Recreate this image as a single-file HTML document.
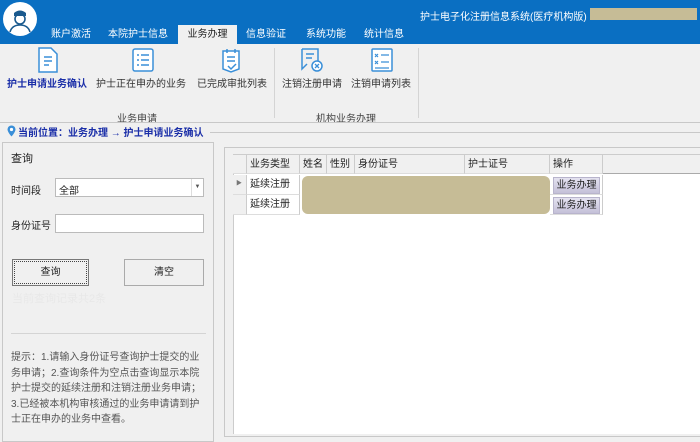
<!DOCTYPE html>
<html><head><meta charset="utf-8"><style>
*{margin:0;padding:0;box-sizing:border-box}
body{width:700px;height:435px;overflow:hidden;background:#f0f0f0;font-family:"Liberation Sans","Noto Sans CJK SC",sans-serif;font-size:10px;color:#222;position:relative}
.a{position:absolute}
.hdr{left:0;top:0;width:700px;height:44px;background:#0a6fc2}
.tab{top:25px;height:19px;line-height:19px;color:#fff;font-size:10px;text-align:center}
.tab.act{background:#f0f0f0;color:#222}
.rb{font-size:10px;color:#333;top:75px;white-space:nowrap}
.ic{top:47px;width:24px;height:26px}
.cell{position:absolute;border-right:1px solid #ccc;border-bottom:1px solid #ddd;height:20px;line-height:19px;padding-left:3px;background:#fff}
.btn{position:absolute;background:linear-gradient(#e4e2f0,#c4c0d8);border:1px solid #b8b4cc;font-size:10px;line-height:16px;text-align:center;width:47px;height:17px}
</style></head><body>
<div class="a hdr"></div>
<div class="a" style="left:3px;top:2px;width:34px;height:34px;border-radius:50%;background:#fff"></div>
<svg class="a" style="left:6px;top:5px" width="28" height="28" viewBox="0 0 28 28"><path d="M8 8 Q14 3 20 8 L20 11 L8 11Z" fill="#1a5a8e"/><circle cx="14" cy="14" r="5" fill="none" stroke="#1a5a8e" stroke-width="1.6"/><path d="M4 27 Q6 20 14 20 Q22 20 24 27" fill="none" stroke="#1a5a8e" stroke-width="1.6"/></svg>
<div class="a" style="left:420px;top:8px;color:#fff;font-size:10px">护士电子化注册信息系统(医疗机构版)</div>
<div class="a" style="left:590px;top:8px;width:107px;height:12px;background:#c6bc96"></div>
<div class="a tab" style="left:42px;width:58px">账户激活</div>
<div class="a tab" style="left:102px;width:72px">本院护士信息</div>
<div class="a tab act" style="left:178px;width:59px">业务办理</div>
<div class="a tab" style="left:240px;width:52px">信息验证</div>
<div class="a tab" style="left:300px;width:52px">系统功能</div>
<div class="a tab" style="left:358px;width:52px">统计信息</div>

<svg class="a ic" style="left:36px" viewBox="0 0 24 26"><path d="M3 1 H15 L21 7 V25 H3Z" fill="#fff" stroke="#3a8fd8" stroke-width="1.5"/><path d="M8 10h8M8 14h8M8 18h5" stroke="#3a8fd8" stroke-width="1.5"/></svg>
<svg class="a ic" style="left:131px" viewBox="0 0 24 26"><rect x="2" y="2" width="20" height="22" rx="2" fill="#fff" stroke="#3a8fd8" stroke-width="1.5"/><path d="M6 8h2M10 8h8M6 13h2M10 13h8M6 18h2M10 18h8" stroke="#3a8fd8" stroke-width="1.5"/></svg>
<svg class="a ic" style="left:219px" viewBox="0 0 24 26"><path d="M4 4 H20 V22 L12 25 L4 22Z" fill="#fff" stroke="#3a8fd8" stroke-width="1.5"/><path d="M8 2v4M16 2v4M8 10h8M8 14h8M9 19l3 3 5-5" stroke="#3a8fd8" stroke-width="1.5" fill="none"/></svg>
<svg class="a ic" style="left:300px" viewBox="0 0 24 26"><path d="M2 2 H18 V14 M2 2 V22 L7 17" fill="none" stroke="#3a8fd8" stroke-width="1.5"/><path d="M6 7h8M6 11h6" stroke="#3a8fd8" stroke-width="1.5"/><circle cx="17" cy="19" r="5" fill="#fff" stroke="#3a8fd8" stroke-width="1.5"/><path d="M15 17l4 4M19 17l-4 4" stroke="#3a8fd8" stroke-width="1.3"/></svg>
<svg class="a ic" style="left:370px" viewBox="0 0 24 26"><rect x="2" y="2" width="20" height="22" rx="1" fill="#fff" stroke="#3a8fd8" stroke-width="1.5"/><path d="M5 7l3 3M8 7l-3 3M5 14l3 3M8 14l-3 3M11 8h8M11 15h8M5 21h14" stroke="#3a8fd8" stroke-width="1.2"/></svg>

<div class="a rb" style="left:7px;color:#1a2ea8;font-weight:bold">护士申请业务确认</div>
<div class="a rb" style="left:96px">护士正在申办的业务</div>
<div class="a rb" style="left:197px">已完成审批列表</div>
<div class="a rb" style="left:282px">注销注册申请</div>
<div class="a rb" style="left:351px">注销申请列表</div>
<div class="a" style="left:117px;top:110px;color:#444">业务申请</div>
<div class="a" style="left:316px;top:110px;color:#444">机构业务办理</div>
<div class="a" style="left:274px;top:48px;width:1px;height:70px;background:#d4d4d4"></div>
<div class="a" style="left:418px;top:48px;width:1px;height:70px;background:#d4d4d4"></div>
<div class="a" style="left:0;top:122px;width:700px;height:1px;background:#c8c8c8"></div>

<svg class="a" style="left:7px;top:125px" width="9" height="12" viewBox="0 0 9 12"><path d="M4.5 0.5 A4 4 0 0 1 8.5 4.5 C8.5 7 4.5 11.5 4.5 11.5 C4.5 11.5 0.5 7 0.5 4.5 A4 4 0 0 1 4.5 0.5Z" fill="#3a8fd8"/><circle cx="4.5" cy="4.5" r="1.6" fill="#fff"/></svg>
<div class="a" style="left:18px;top:124px;color:#1a2ea8;font-weight:bold;font-size:10px">当前位置：业务办理 → 护士申请业务确认</div>
<div class="a" style="left:210px;top:132px;width:490px;height:1px;background:#c8c8c8"></div>

<div class="a" style="left:2px;top:142px;width:212px;height:300px;border:1px solid #c8c8c8"></div>
<div class="a" style="left:11px;top:150px;font-size:11px">查询</div>
<div class="a" style="left:11px;top:182px">时间段</div>
<div class="a" style="left:55px;top:178px;width:149px;height:19px;background:#fff;border:1px solid #bbb;padding:3px 3px">全部</div>
<div class="a" style="left:191px;top:179px;width:12px;height:17px;border-left:1px solid #ddd;font-size:6px;text-align:center;line-height:17px;color:#555">▼</div>
<div class="a" style="left:11px;top:217px">身份证号</div>
<div class="a" style="left:55px;top:214px;width:149px;height:19px;background:#fff;border:1px solid #bbb"></div>
<div class="a" style="left:12px;top:259px;width:77px;height:27px;border:1px solid #777;outline:1px dotted #444;outline-offset:-3px;text-align:center;line-height:25px">查询</div>
<div class="a" style="left:124px;top:259px;width:80px;height:27px;border:1px solid #aaa;text-align:center;line-height:25px">清空</div>
<div class="a" style="left:12px;top:290px;color:#e8e8e8;font-size:11px">当前查询记录共2条</div>
<div class="a" style="left:11px;top:333px;width:195px;height:1px;background:#d4d4d4"></div>
<div class="a" style="left:11px;top:350px;width:195px;line-height:15.5px;color:#555;font-size:10px">提示：1.请输入身份证号查询护士提交的业务申请；2.查询条件为空点击查询显示本院护士提交的延续注册和注销注册业务申请；3.已经被本机构审核通过的业务申请请到护士正在申办的业务中查看。</div>

<div class="a" style="left:224px;top:147px;width:476px;height:290px;border:1px solid #c8c8c8;border-right:none"></div>
<div class="a" style="left:233px;top:154px;width:467px;height:280px;background:#fff;border-left:1px solid #ccc;border-top:1px solid #ccc"></div>
<div class="a" style="left:233px;top:155px;width:467px;height:19px;background:#f0f0f0;border-bottom:1px solid #aaa"></div>
<div class="cell" style="left:233px;top:155px;width:14px;height:19px;background:#f0f0f0"></div>
<div class="cell" style="left:247px;top:155px;width:53px;height:19px;background:#f0f0f0">业务类型</div>
<div class="cell" style="left:300px;top:155px;width:27px;height:19px;background:#f0f0f0">姓名</div>
<div class="cell" style="left:327px;top:155px;width:28px;height:19px;background:#f0f0f0">性别</div>
<div class="cell" style="left:355px;top:155px;width:110px;height:19px;background:#f0f0f0">身份证号</div>
<div class="cell" style="left:465px;top:155px;width:85px;height:19px;background:#f0f0f0">护士证号</div>
<div class="cell" style="left:550px;top:155px;width:53px;height:19px;background:#f0f0f0">操作</div>
<div class="cell" style="left:233px;top:175px;width:14px;background:#f0f0f0;font-size:6px;color:#777">▶</div>
<div class="cell" style="left:233px;top:195px;width:14px;background:#f0f0f0"></div>
<div class="cell" style="left:247px;top:175px;width:53px">延续注册</div>
<div class="cell" style="left:247px;top:195px;width:53px">延续注册</div>
<div class="cell" style="left:550px;top:175px;width:53px"></div>
<div class="cell" style="left:550px;top:195px;width:53px"></div>
<div class="a" style="left:302px;top:176px;width:248px;height:38px;background:#c6bc96;border-radius:6px"></div>
<div class="btn" style="left:553px;top:177px">业务办理</div>
<div class="btn" style="left:553px;top:197px">业务办理</div>
</body></html>
